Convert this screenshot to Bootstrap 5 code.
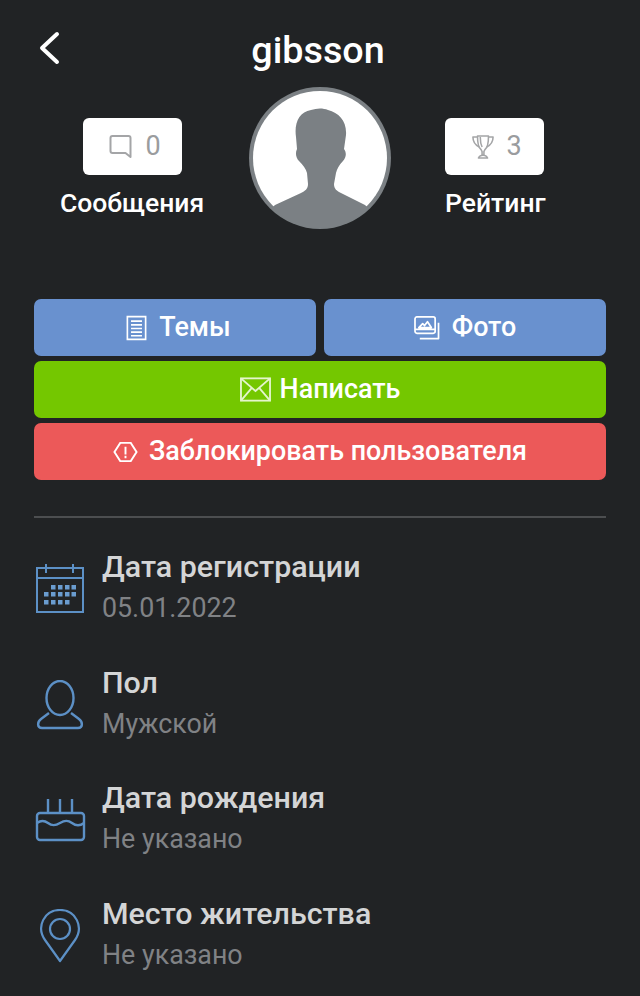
<!DOCTYPE html>
<html lang="ru">
<head>
   <meta charset="UTF-8">
   <meta name="viewport" content="width=device-width, initial-scale=1.0">
   <title>gibsson</title>
   <link href="https://cdn.jsdelivr.net/npm/bootstrap@5.3.3/dist/css/bootstrap.min.css" rel="stylesheet">
   <style>
       html, body {
           height: 996px;
           overflow: hidden;
       }
       body {
           background-color: #212325;
           font-family: Roboto, "Liberation Sans", sans-serif;
       }
       .page-wrap {
           padding: 0 34px;
       }
       .top-head {
           height: 87px;
           padding-top: 26px;
           position: relative;
       }
       .top-head h1 {
           font-size: 37.7px;
           line-height: 48px;
           font-weight: 500;
           color: #fff;
           margin: 0;
           padding-right: 4px;
           text-align: center;
       }
       .back-link {
           position: absolute;
           left: 3px;
           top: 31px;
           line-height: 0;
       }
       .stats-row {
           height: 212px;
       }
       .stat-col {
           padding-top: 31px;
       }
       .stat-col.left-col {
           width: 196px;
           margin-right: 19px;
       }
       .stat-col.right-col {
           margin-left: 54px;
       }
       .stat-box {
           width: 99px;
           height: 57px;
           background-color: #fff;
           border-radius: 6px;
           color: #9a9c9e;
           font-size: 27px;
           gap: 12px;
           padding-left: 5px;
       }
       .stat-label {
           font-size: 26.500px;
           line-height: 30px;
           font-weight: 500;
           color: #fff;
           margin-top: 13px;
           white-space: nowrap;
       }
       .avatar-pic {
           width: 142px;
           height: 142px;
           flex: none;
       }
       .action-grid {
           display: grid;
           grid-template-columns: 1fr 1fr;
           column-gap: 8px;
           row-gap: 5px;
       }
       .act-btn {
           height: 57px;
           border: 0;
           border-radius: 7px;
           color: #fff;
           font-size: 26.900px;
           font-weight: 500;
           gap: 12px;
           padding: 0;
       }
       .act-btn:hover, .act-btn:active {
           color: #fff;
       }
       .act-blue, .act-blue:hover { background-color: #6991cf; }
       .act-green, .act-green:hover { background-color: #74c700; gap: 9px; }
       .act-red, .act-red:hover { background-color: #ec5959; gap: 11px; }
       .shift-btn {
           padding-left: 7px;
       }
       .wide-btn {
           grid-column: 1 / 3;
       }
       .sep-line {
           border-top: 2px solid #4c4e50;
           margin: 36px 0 25px;
           opacity: 1;
       }
       .info-row {
           height: 115.5px;
           gap: 16px;
       }
       .info-icon {
           width: 52px;
           flex: none;
           padding-top: 21px;
           line-height: 0;
       }
       .pin-ico {
           margin-top: -2px;
       }
       .info-text {
           padding-top: 2px;
       }
       .info-title {
           font-size: 30.400px;
           line-height: 44px;
           font-weight: 500;
           color: #d4d5d6;
       }
       .info-value {
           font-size: 26.800px;
           line-height: 38px;
           color: #808285;
       }
   </style>
</head>
<body>
   <div class="page-wrap">
       <div class="top-head">
           <a href="#" class="back-link">
               <svg width="24" height="34" viewBox="0 0 24 34" fill="none" stroke="#fff" stroke-width="4" stroke-linecap="round" stroke-linejoin="round"><path d="M20 3 5 17l15 14"/></svg>
           </a>
           <h1>gibsson</h1>
       </div>

       <div class="stats-row d-flex align-items-start">
           <div class="stat-col left-col d-flex flex-column align-items-center">
               <div class="stat-box d-flex align-items-center justify-content-center">
                   <svg width="25" height="25" viewBox="0 0 24 25" fill="none" stroke="#a4a5a7" stroke-width="2" stroke-linejoin="round"><path d="M4 2h16a2 2 0 0 1 2 2v19l-5-4H4a2 2 0 0 1-2-2V4a2 2 0 0 1 2-2z"/></svg>
                   <span>0</span>
               </div>
               <div class="stat-label">Сообщения</div>
           </div>
           <svg class="avatar-pic" viewBox="0 0 142 142">
               <defs><clipPath id="avClip"><circle cx="71" cy="71" r="70"/></clipPath></defs>
               <circle cx="71" cy="71" r="71" fill="#7b8084"/>
               <circle cx="71" cy="71" r="67" fill="#fff"/>
               <path clip-path="url(#avClip)" fill="#7b8084" d="M47 50C45 36 50 25 62 23c6-2 12-2 17 0 11 3 19 11 18 25l-2 14c3 4 2 9-1 12-4 4-6 8-7 12l-2 11c0 5 3 7 7 9l24 12 26 24H0l26-24 26-12c4-2 7-4 7-9l-1-11c-1-4-4-8-8-12-3-3-4-8-2-12z"/>
           </svg>
           <div class="stat-col right-col d-flex flex-column align-items-start">
               <div class="stat-box d-flex align-items-center justify-content-center">
                   <svg width="22" height="26" viewBox="0 0 24 28" fill="none" stroke="#a4a5a7" stroke-width="1.7" stroke-linejoin="round"><path d="M6 2h12c0 8-1 13-4 15l-1 2v4h-2v-4l-1-2C7 15 6 10 6 2z"/><path d="M6 3H1c0 6 3 9 7 11M18 3h5c0 6-3 9-7 11M7 26c1-2 3-3 5-3s4 1 5 3z"/><path d="M9 3c0 5 1 9 2 11"/></svg>
                   <span>3</span>
               </div>
               <div class="stat-label">Рейтинг</div>
           </div>
       </div>

       <div class="action-grid">
           <a href="#" class="btn act-btn act-blue shift-btn d-flex align-items-center justify-content-center">
               <svg width="21" height="26" viewBox="0 0 23 27" fill="none" stroke="#fff" stroke-width="1.8"><path d="M1.500 1h20v25h-20z"/><path d="M5.500 6h12M5.500 10h12M5.500 14h12M5.500 18h12M5.500 22h12"/></svg>
               Темы
           </a>
           <a href="#" class="btn act-btn act-blue d-flex align-items-center justify-content-center">
               <svg width="26" height="24" viewBox="0 0 27 25" fill="none" stroke="#fff" stroke-width="1.8" stroke-linejoin="round"><rect x="1" y="1" width="21" height="17" rx="2"/><path d="M1 14h21M5 12l4-4 2 2 3-4 4 6z"/><path d="M25.500 7v16.500H6"/></svg>
               Фото
           </a>
           <a href="#" class="btn act-btn act-green wide-btn d-flex align-items-center justify-content-center">
               <svg width="31" height="25" viewBox="0 0 32 25" fill="none" stroke="#e4f5cc" stroke-width="1.9"><rect x="1" y="1" width="30" height="23"/><path d="m1 1 15 13L31 1M1 24l11-13M31 24 20 11"/></svg>
               Написать
           </a>
           <a href="#" class="btn act-btn act-red wide-btn d-flex align-items-center justify-content-center">
               <svg width="25" height="22" viewBox="0 0 26 22" fill="none" stroke="#fff" stroke-width="2"><path d="M7.500 1.500h11L24.500 11l-6 9.500h-11L1.500 11z"/><path d="M13 5.500v8M13 15v2.500"/></svg>
               Заблокировать пользователя
           </a>
       </div>

       <hr class="sep-line">

       <div class="info-row d-flex">
           <div class="info-icon">
               <svg width="52" height="50" viewBox="0 0 52 50" fill="none" stroke="#5c90c6" stroke-width="2"><path d="M3 4h46v44H3zM3 14h46M12 0v9M39 0v9"/><path stroke="none" fill="#6a9ccf" d="M17 21h4.500v4.500H17zM24 21h4.500v4.500H24zM31 21h4.500v4.500H31zM37.500 21H42v4.500h-4.500zM10 28h4.500v4.500H10zM17 28h4.500v4.500H17zM24 28h4.500v4.500H24zM31 28h4.500v4.500H31zM37.500 28H42v4.500h-4.500zM10 36h4.500v4.500H10zM17 36h4.500v4.500H17zM24 36h4.500v4.500H24zM31 36h4.500v4.500H31z"/></svg>
           </div>
           <div class="info-text">
               <div class="info-title">Дата регистрации</div>
               <div class="info-value">05.01.2022</div>
           </div>
       </div>
       <div class="info-row d-flex">
           <div class="info-icon">
               <svg width="52" height="50" viewBox="0 0 52 50" fill="none" stroke="#5c90c6" stroke-width="2.400" stroke-linejoin="round"><ellipse cx="26" cy="18" rx="13.500" ry="17"/><path d="M15 33 7 39c-4 3-4 9 1 9h36c5 0 5-6 1-9l-8-6"/></svg>
           </div>
           <div class="info-text">
               <div class="info-title">Пол</div>
               <div class="info-value">Мужской</div>
           </div>
       </div>
       <div class="info-row d-flex">
           <div class="info-icon">
               <svg width="52" height="50" viewBox="0 0 52 50" fill="none" stroke="#5c90c6" stroke-width="2.400" stroke-linejoin="round"><rect x="3" y="18" width="47" height="27" rx="3"/><path d="M3 28c4-3 7-3 11 0s7 3 12 0 8-3 12 0 8 3 12 0"/><path d="M14 4v14M26 4v14M38 4v14"/></svg>
           </div>
           <div class="info-text">
               <div class="info-title">Дата рождения</div>
               <div class="info-value">Не указано</div>
           </div>
       </div>
       <div class="info-row d-flex">
           <div class="info-icon">
               <svg class="pin-ico" width="52" height="54" viewBox="0 0 52 54" fill="none" stroke="#5c90c6" stroke-width="2.200" stroke-linejoin="round"><path d="M26 52 11 31C2 18 10 1 26 1s24 17 15 30z"/><circle cx="26" cy="20" r="10"/></svg>
           </div>
           <div class="info-text">
               <div class="info-title">Место жительства</div>
               <div class="info-value">Не указано</div>
           </div>
       </div>
   </div>
   <script src="https://cdn.jsdelivr.net/npm/bootstrap@5.3.3/dist/js/bootstrap.bundle.min.js"></script>
</body>
</html>
